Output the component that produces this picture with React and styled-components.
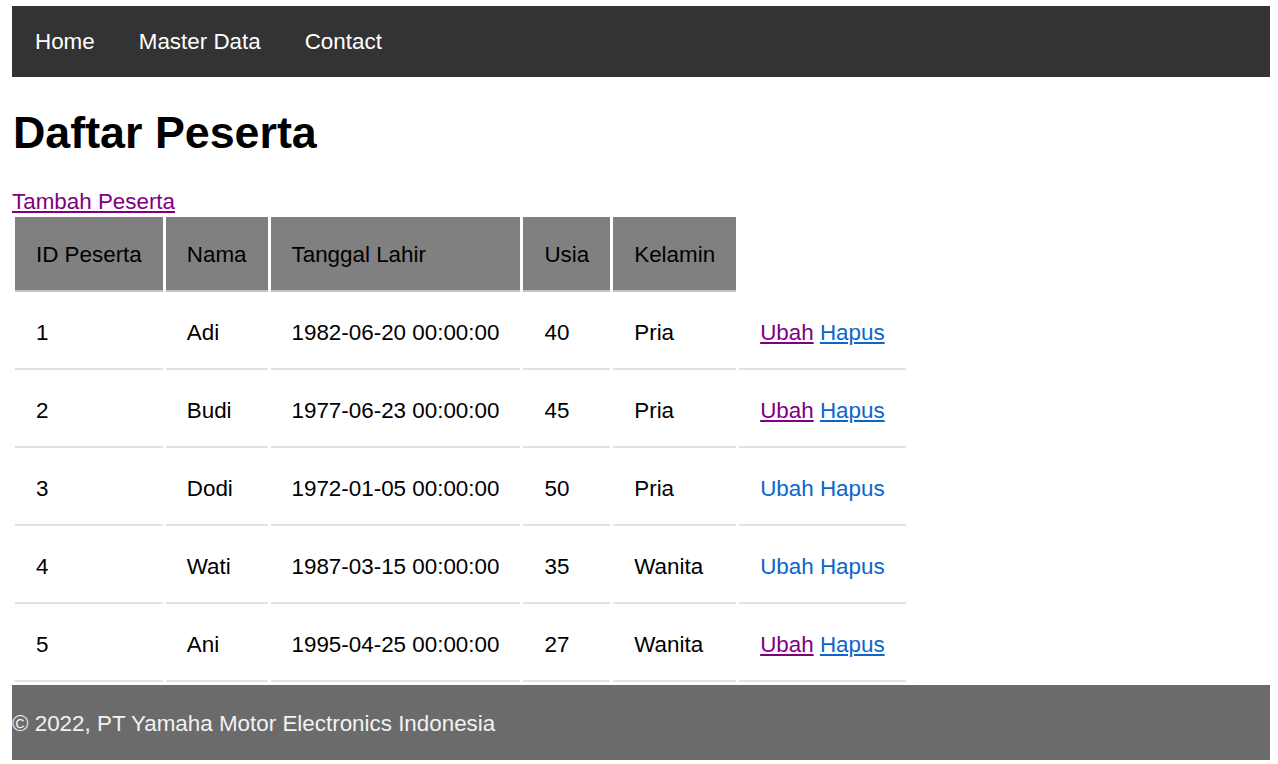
import React from "react";
import styled, { createGlobalStyle } from "styled-components";

const GlobalStyle = createGlobalStyle`
  html, body {
    margin: 0;
    padding: 0;
    background: #fff;
  }
  body {
    padding: 6px 8px 4px 12px;
    font-family: "Liberation Sans", Arial, sans-serif;
    font-size: 22.4px;
    color: #000;
  }
`;

const Nav = styled.nav`
  display: flex;
  align-items: center;
  background-color: #333;
  height: 71px;
  padding: 0 1px;
`;

const NavLink = styled.a`
  display: block;
  color: #fff;
  text-decoration: none;
  padding: 0 22px;
  font-size: 22.4px;
  line-height: 26px;
`;

const Title = styled.h1`
  font-size: 44.8px;
  font-weight: bold;
  margin: 30px 0 31px 1px;
  line-height: 51px;
`;

const TextLink = styled.a`
  color: ${(p) => (p.$visited ? "#800080" : "#0b66cc")};
  text-decoration: ${(p) => (p.$plain ? "none" : "underline")};
  text-underline-offset: 2px;
`;

const LinkLine = styled.div`
  line-height: 26px;
  height: 25px;
`;

const Table = styled.table`
  border-collapse: separate;
  border-spacing: 3px;
  margin: 0;
  font-size: 22.4px;
`;

const Th = styled.th`
  background-color: #808080;
  border-bottom: 2px solid #c4c4c4;
  padding: 25px 21px 22px;
  text-align: left;
  font-weight: normal;
  line-height: 26px;
  white-space: nowrap;
`;

const EmptyTh = styled.th`
  background: transparent;
`;

const Td = styled.td`
  border-bottom: 2px solid #e2e2e2;
  padding: 25px 21px 22px;
  line-height: 26px;
  white-space: nowrap;
`;

const Footer = styled.footer`
  background-color: #6b6b6b;
  color: #f2f2f2;
  height: 75px;
  display: flex;
  align-items: center;
  padding-top: 2px;
  box-sizing: border-box;
  font-size: 22.4px;
`;

const rows = [
  { id: 1, nama: "Adi", lahir: "1982-06-20 00:00:00", usia: 40, kelamin: "Pria", plain: false },
  { id: 2, nama: "Budi", lahir: "1977-06-23 00:00:00", usia: 45, kelamin: "Pria", plain: false },
  { id: 3, nama: "Dodi", lahir: "1972-01-05 00:00:00", usia: 50, kelamin: "Pria", plain: true },
  { id: 4, nama: "Wati", lahir: "1987-03-15 00:00:00", usia: 35, kelamin: "Wanita", plain: true },
  { id: 5, nama: "Ani", lahir: "1995-04-25 00:00:00", usia: 27, kelamin: "Wanita", plain: false },
];

export default function App() {
  return (
    <>
      <GlobalStyle />
      <Nav>
        <NavLink href="#">Home</NavLink>
        <NavLink href="#">Master Data</NavLink>
        <NavLink href="#">Contact</NavLink>
      </Nav>
      <Title>Daftar Peserta</Title>
      <LinkLine>
        <TextLink href="#" $visited>
          Tambah Peserta
        </TextLink>
      </LinkLine>
      <Table>
        <thead>
          <tr>
            <Th>ID Peserta</Th>
            <Th>Nama</Th>
            <Th>Tanggal Lahir</Th>
            <Th>Usia</Th>
            <Th>Kelamin</Th>
            <EmptyTh />
          </tr>
        </thead>
        <tbody>
          {rows.map((r) => (
            <tr key={r.id}>
              <Td>{r.id}</Td>
              <Td>{r.nama}</Td>
              <Td>{r.lahir}</Td>
              <Td>{r.usia}</Td>
              <Td>{r.kelamin}</Td>
              <Td>
                <TextLink href="#" $visited={!r.plain} $plain={r.plain}>
                  Ubah
                </TextLink>{" "}
                <TextLink href="#" $plain={r.plain}>
                  Hapus
                </TextLink>
              </Td>
            </tr>
          ))}
        </tbody>
      </Table>
      <Footer>© 2022, PT Yamaha Motor Electronics Indonesia</Footer>
    </>
  );
}
